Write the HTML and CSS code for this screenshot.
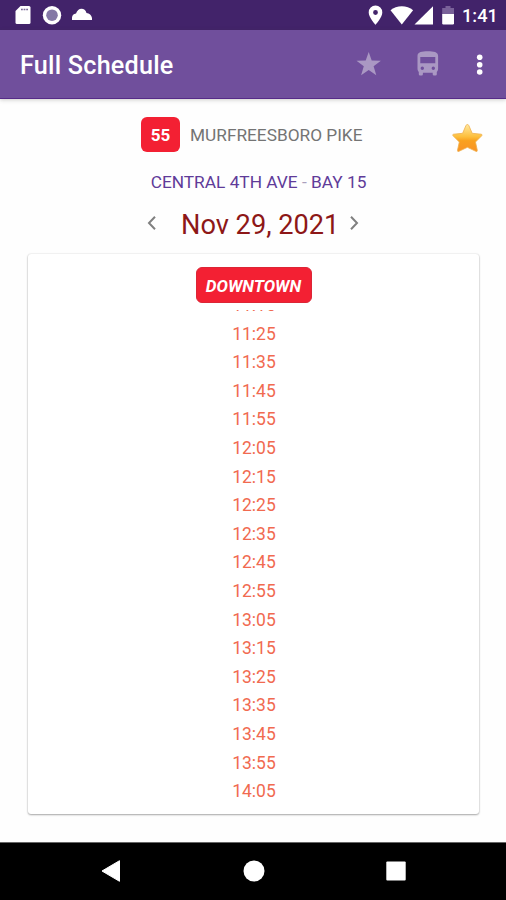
FILE: index.html
```html
<!DOCTYPE html>
<html lang="en">
<head>
<meta charset="utf-8">
<title>Full Schedule</title>
<link rel="stylesheet" href="styles.css">
</head>
<body>
<div class="screen">
  <div class="status">
    <svg class="status-left" width="80" height="30" viewBox="14 0 80 30">
      <path fill="#fff" d="M20.5 6H29a1.5 1.5 0 0 1 1.5 1.5v15A1.5 1.5 0 0 1 29 24H17a1.5 1.5 0 0 1-1.5-1.5V11z"/>
      <path stroke="#7b6a98" stroke-width="1.6" stroke-dasharray="1.8 .8" d="M21 9.500h7.500"/>
      <circle cx="52" cy="15.2" r="9.2" fill="#fff"/>
      <circle cx="52" cy="15.2" r="5.8" fill="#8478a6"/>
      <path fill="#fff" d="M72 20v-2.500q.3-3.500 4-4 1.700-4.700 5.500-4.700 3.700 0 5 4.200 4.500.5 5.500 5V20z"/>
    </svg>
    <svg class="status-icons" width="90" height="30" viewBox="366 0 90 30">
      <path fill="#fff" fill-rule="evenodd" d="M375.500 5.500a6.800 6.800 0 0 0-6.800 6.900c0 4.800 6.800 12.300 6.800 12.300s6.800-7.500 6.800-12.300a6.800 6.800 0 0 0-6.800-6.900zm0 4.600a2.400 2.400 0 1 1 0 4.800 2.400 2.400 0 0 1 0-4.800z"/>
      <path fill="#fff" d="M401.800 24.500L390.500 10.200c6-5.400 16.600-5.400 22.600 0z"/>
      <path fill="#fff" d="M433 6.300v18.200h-18.500z"/>
      <path fill="#796199" d="M445.500 6h5v2h3.500v6.500h-11.800V8h3.300z"/>
      <path fill="#fff" d="M442.200 14H454v9.300a1.200 1.200 0 0 1-1.200 1.200h-9.400a1.200 1.200 0 0 1-1.200-1.200z"/>
    </svg>
    <span class="clock">1:41</span>
  </div>
  <header class="appbar">
    <h1 class="title">Full Schedule</h1>
    <svg class="actions" width="134" height="40" viewBox="354 45 134 40">
      <path fill="#aa98c3" d="M368.700 52l3 8.600 9.200.1-7.300 5.500 2.700 9-7.600-5.300-7.600 5.300 2.700-9-7.300-5.500 9.200-.1z"/>
      <path fill="#aa98c3" fill-rule="evenodd" d="M417.500 56c0-4 4.500-4.700 10.300-4.700s10.300.7 10.300 4.700v12.600c0 1.500-.5 2.600-1.300 3.400v2.200a1.300 1.300 0 0 1-1.300 1.300H434a1.300 1.300 0 0 1-1.300-1.300v-1.400h-9.800v1.400a1.300 1.300 0 0 1-1.300 1.300h-1.500a1.300 1.300 0 0 1-1.300-1.300V72c-.8-.8-1.300-1.900-1.300-3.400zM420.300 57v6.200h15V57zM422.300 66.500a1.700 1.700 0 1 0 0 3.400 1.700 1.700 0 0 0 0-3.400zM433.300 66.500a1.700 1.700 0 1 0 0 3.400 1.700 1.700 0 0 0 0-3.400z"/>
      <g fill="#fff"><circle cx="479.700" cy="57.300" r="2.800"/><circle cx="479.700" cy="64.700" r="2.800"/><circle cx="479.700" cy="72" r="2.800"/></g>
    </svg>
  </header>
  <main class="content">
    <div class="route">
      <span class="badge">55</span>
      <span class="route-name">MURFREESBORO PIKE</span>
      <svg class="favorite" width="34" height="34" viewBox="450 122 34 34">
        <defs><linearGradient id="gold" x1="0" y1="0" x2="0" y2="1"><stop offset="0" stop-color="#ffe9a0"/><stop offset=".45" stop-color="#fdbf3c"/><stop offset=".6" stop-color="#f9a11f"/><stop offset="1" stop-color="#f99326"/></linearGradient></defs>
        <path fill="url(#gold)" stroke="#efb04c" stroke-width=".8" stroke-linejoin="round" d="M467.400 124.500q1 0 1.500 1.200l3.300 7.600 9 .9q1.500.3.500 1.600l-6.200 6.200 1.800 8.300q.1 1.700-1.500 1l-8.400-4-8.400 4q-1.600.7-1.500-1l1.800-8.300-6.200-6.200q-1-1.300.5-1.600l9-.9 3.300-7.600q.5-1.200 1.500-1.200z"/>
      </svg>
    </div>
    <div class="stop">CENTRAL 4TH AVE <span class="dash">-</span> BAY 15</div>
    <div class="date-row">
      <svg width="10" height="16" viewBox="0 0 10 16"><path d="M8 1.800L2 8l6 6.200"/></svg>
      <span class="date">Nov 29, 2021</span>
      <svg width="10" height="16" viewBox="0 0 10 16"><path d="M2 1.800L8 8l-6 6.200"/></svg>
    </div>
    <section class="card">
      <div class="direction">DOWNTOWN</div>
      <div class="viewport">
        <ul class="times">
          <li>11:15</li><li>11:25</li><li>11:35</li><li>11:45</li><li>11:55</li><li>12:05</li><li>12:15</li><li>12:25</li><li>12:35</li><li>12:45</li><li>12:55</li><li>13:05</li><li>13:15</li><li>13:25</li><li>13:35</li><li>13:45</li><li>13:55</li><li>14:05</li>
        </ul>
      </div>
    </section>
  </main>
  <nav class="navbar">
    <svg width="20" height="22" viewBox="0 0 20 22"><path fill="#fff" d="M18.500.7v20.600L1 11z" stroke="#fff" stroke-linejoin="round"/></svg>
    <svg width="22" height="22" viewBox="0 0 22 22"><circle cx="11" cy="11" r="10.500" fill="#fff"/></svg>
    <svg width="20" height="20" viewBox="0 0 20 20"><rect x=".3" y=".5" width="19.400" height="19" rx="1" fill="#fff"/></svg>
  </nav>
</div>
</body>
</html>
```

FILE: styles.css
```css
* { box-sizing: border-box; }
body { margin: 0; font-family: Roboto, "Liberation Sans", sans-serif; background: #fefefe; }
svg { display: block; flex: none; }
.screen { width: 506px; height: 900px; display: flex; flex-direction: column; overflow: hidden; }
.status { height: 30px; flex: none; background: #42236a; display: flex; align-items: center; padding: 0 8px 0 14px; }
.status-icons { margin-left: auto; }
.clock { width: 42px; margin: 2px 0 0; padding-left: 6px; color: #fff; font-size: 18.200px; font-weight: 500; line-height: 28px; white-space: nowrap; }
.appbar { height: 69px; flex: none; background: #704f9c; border-bottom: 1.500px solid #562b88; box-shadow: 0 1px 4px rgba(60, 60, 50, .25); display: flex; align-items: center; justify-content: space-between; padding: 1px 18px 0 20px; }
.title { margin: 3px 0 0; color: #fff; font-size: 25.200px; letter-spacing: .22px; font-weight: 500; line-height: 30px; white-space: nowrap; }
.content { flex: 1; min-height: 0; display: flex; flex-direction: column; padding: 18px 27px 0; }
.route { height: 35px; display: flex; align-items: center; margin: 0 -5px 0 114px; }
.badge { width: 39px; height: 35px; border-radius: 6px; background: #f32033; color: #fff; font-size: 17px; font-weight: 700; line-height: 36px; text-align: center; }
.route-name { margin-left: 10px; font-size: 17.250px; line-height: 36px; color: #747474; padding-top: 1px; white-space: nowrap; }
.favorite { margin-left: auto; margin-top: 8px; }
.stop { margin-top: 18px; height: 24px; line-height: 24px; font-size: 17.300px; color: #5f3b99; text-align: center; padding-left: 11px; white-space: nowrap; }
.dash { color: #aaa0bd; }
.date-row { margin-top: 13px; height: 36px; display: flex; align-items: center; gap: 24px; padding-left: 120px; }
.date-row svg { fill: none; stroke: #808080; stroke-width: 2; margin-top: -4px; }
.date { width: 158px; margin-right: -14px; font-size: 27.200px; line-height: 36px; color: #8d1717; white-space: nowrap; }
.card { margin: 11px 0 0 1px; width: 451px; height: 560px; border-radius: 3px; background: #fff; box-shadow: 0 1px 2px rgba(0, 0, 0, .32), 0 0 2px rgba(0, 0, 0, .14); display: flex; flex-direction: column; align-items: center; padding-top: 13px; }
.direction { width: 116px; height: 36px; flex: none; border-radius: 6px; background: #f32033; border: 1px solid #dc2636; color: #fff; font-size: 17px; font-weight: 700; font-style: italic; line-height: 36px; text-align: center; }
.viewport { width: 100%; margin-top: 7px; flex: 1; overflow: hidden; }
.times { list-style: none; margin: -19px 0 0; padding: 0 0 0 1px; }
.times li { height: 28.600px; line-height: 28.600px; font-size: 17.500px; text-align: center; color: #f16a50; }
.navbar { height: 58px; flex: none; background: #000; border-top: 1px solid #666; display: flex; align-items: center; justify-content: space-between; padding: 0 100px 1px 101px; }
```
